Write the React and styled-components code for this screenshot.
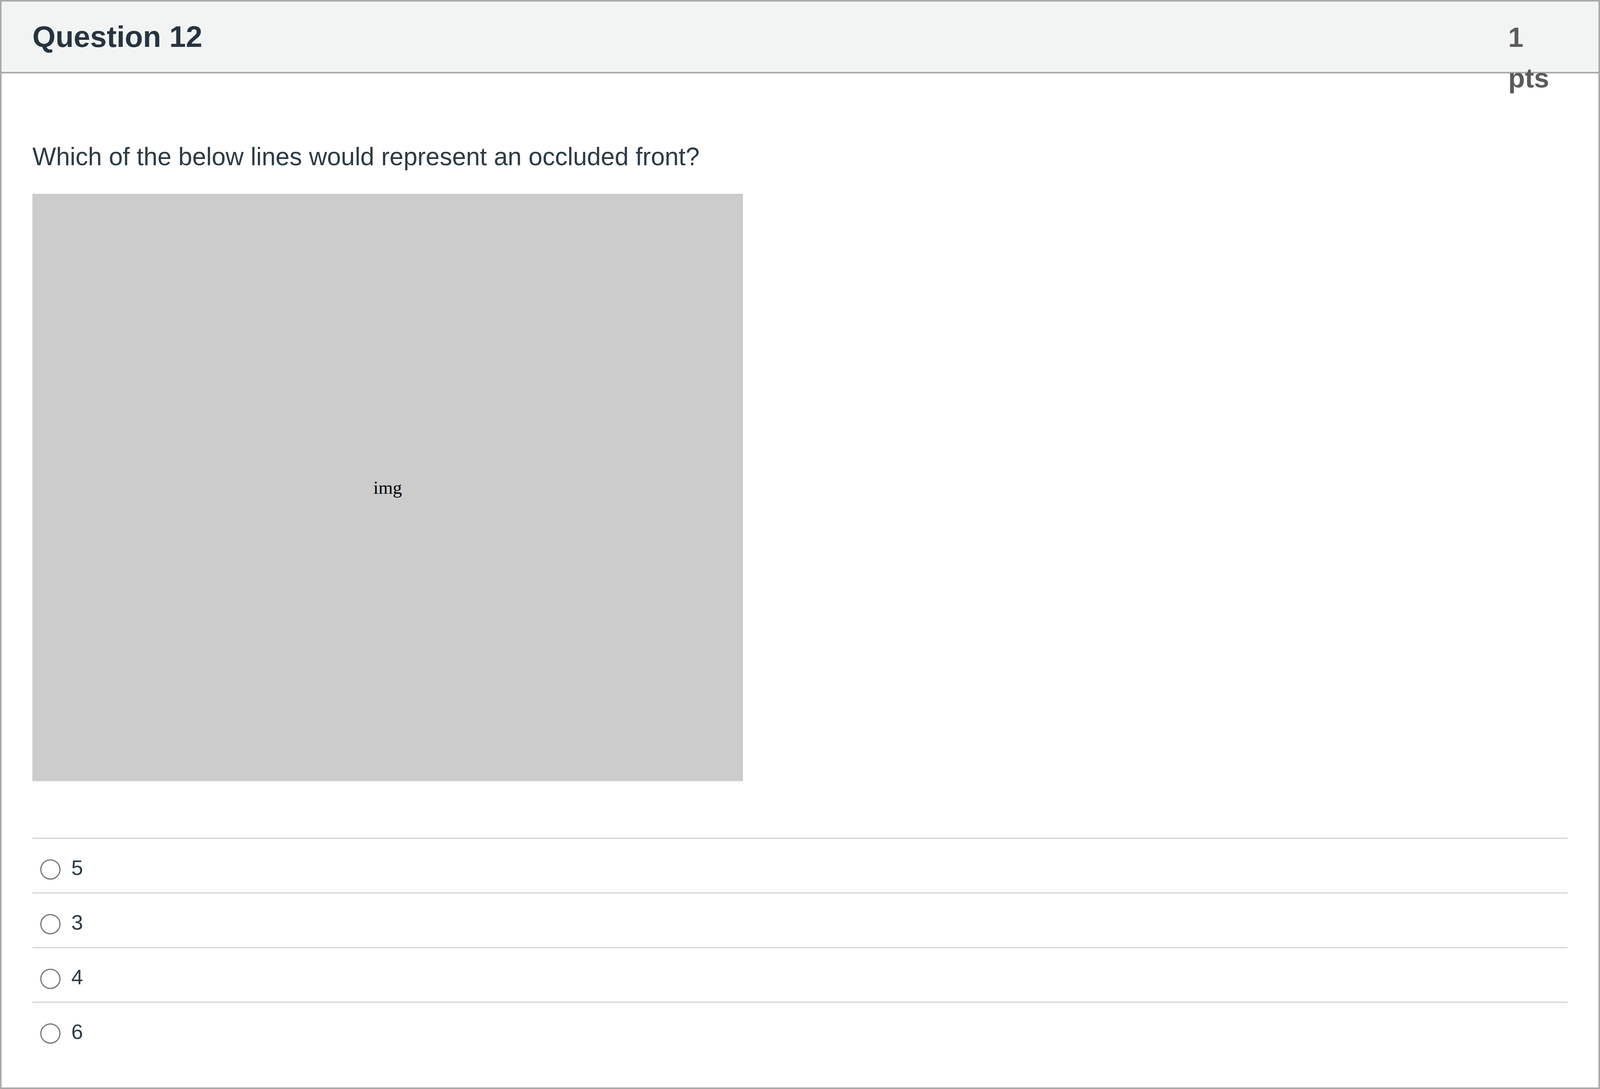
import React from "react";
import styled, { createGlobalStyle } from "styled-components";

/* horizontal measures are expressed relative to the 4144px-wide design */
const hx = (px) => `${((px / 4144) * 100).toFixed(4)}vw`;

const GlobalStyle = createGlobalStyle`
  html, body {
    margin: 0;
    padding: 0;
    background: #ffffff;
    overflow: hidden;
  }
  body {
    font-family: "Liberation Sans", Helvetica, Arial, sans-serif;
  }
  * { box-sizing: border-box; }
`;

const Card = styled.section`
  width: 100%;
  height: 2788px;
  border: 4px solid #aaaaaa;
  background: #ffffff;
  font-family: "Liberation Sans", Helvetica, Arial, sans-serif;
`;

const Header = styled.header`
  display: flex;
  align-items: baseline;
  justify-content: space-between;
  height: 184px;
  padding: 38px ${hx(80)} 0 ${hx(80)};
  background: #f2f4f4;
  border-bottom: 4px solid #aaaaaa;
`;

const Title = styled.h2`
  margin: 0;
  font-size: 76px;
  line-height: 104px;
  font-weight: 700;
  color: #26343f;
`;

const Points = styled.div`
  width: 152px;
  font-size: 70px;
  line-height: 104px;
  font-weight: 700;
  color: #5b5b5b;
`;

const Body = styled.div`
  padding: 165px ${hx(80)} 80px ${hx(80)};
`;

const QuestionText = styled.p`
  margin: 0 0 47px 0;
  font-size: 64px;
  line-height: 96px;
  color: #2d3b45;
`;

const ImagePlaceholder = styled.div`
  width: ${hx(1840)};
  height: 1504px;
  background: #cccccc;
  display: flex;
  align-items: center;
  justify-content: center;
  font-family: "Liberation Serif", "Times New Roman", serif;
  font-size: 47px;
  color: #000000;
`;

const Answers = styled.ul`
  list-style: none;
  margin: 144px 0 0 0;
  padding: 0;
`;

const AnswerRow = styled.li`
  display: flex;
  align-items: flex-start;
  height: 140px;
  padding: 33px 0 0 ${hx(20)};
  border-top: 4px solid #dcdcdc;
`;

const Radio = styled.span`
  flex: none;
  width: 52px;
  height: 52px;
  margin-top: 19px;
  border: 3px solid #767676;
  border-radius: 50%;
  background: #ffffff;
`;

const AnswerText = styled.span`
  margin-left: ${hx(28)};
  font-size: 54px;
  line-height: 80px;
  color: #2d3b45;
`;

const answers = ["5", "3", "4", "6"];

export default function App() {
  return (
    <>
      <GlobalStyle />
      <Card>
        <Header>
          <Title>Question 12</Title>
          <Points>1 pts</Points>
        </Header>
        <Body>
          <QuestionText>
            Which of the below lines would represent an occluded front?
          </QuestionText>
          <ImagePlaceholder role="img" aria-label="img">
            img
          </ImagePlaceholder>
          <Answers>
            {answers.map((a) => (
              <AnswerRow key={a}>
                <Radio />
                <AnswerText>{a}</AnswerText>
              </AnswerRow>
            ))}
          </Answers>
        </Body>
      </Card>
    </>
  );
}
